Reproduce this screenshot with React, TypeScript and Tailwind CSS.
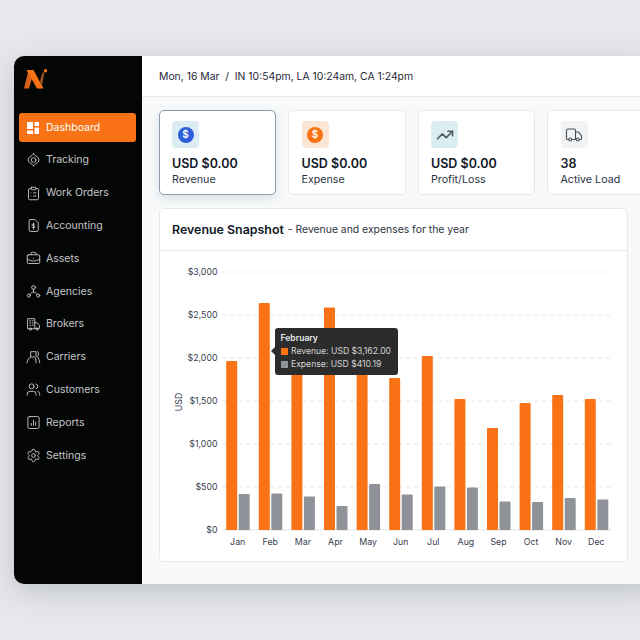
import {
  BriefcaseBusiness,
  ClipboardList,
  Settings,
  TrendingUp,
  Truck,
  Users,
} from "lucide-react";
import type { ReactNode } from "react";

const iconProps = {
  width: 15,
  height: 15,
  viewBox: "0 0 24 24",
  fill: "none",
  stroke: "currentColor",
  strokeWidth: 1.5,
  strokeLinecap: "round" as const,
  strokeLinejoin: "round" as const,
};

function GridIcon() {
  return (
    <svg width="14" height="14" viewBox="0 0 14 14" fill="#fff">
      <rect x="1" y="1" width="6" height="7" rx="0.5" />
      <rect x="8.5" y="1" width="4.5" height="4" rx="0.5" />
      <rect x="8.5" y="6.5" width="4.5" height="6.5" rx="0.5" />
      <rect x="1" y="9.5" width="6" height="3.5" rx="0.5" />
    </svg>
  );
}

function TrackingIcon() {
  return (
    <svg {...iconProps} width={16} height={16}>
      <path d="M12 1.500c1 2.500 3 4 5.500 5 1 .5 3 3 3 5.500s-2 4.500-3 5c-2.500 1-4.500 2.500-5.500 5-1-2.500-3-4-5.500-5-1-.5-3-2.500-3-5s2-5 3-5.500c2.500-1 4.500-2.500 5.500-5z" />
      <circle cx="12" cy="12" r="3.800" />
    </svg>
  );
}

function AccountingIcon() {
  return (
    <svg {...iconProps}>
      <path d="M7 2.500h7.500l5 5V19.500a2 2 0 0 1-2 2H7a2 2 0 0 1-2-2V4.500a2 2 0 0 1 2-2z" />
      <path d="M14.500 10.500c-.5-1-4.500-1.400-5 .4-.4 1.800 5 1.400 4.800 3.400-.3 1.800-4.300 1.500-5-.2M12 8v10" />
    </svg>
  );
}

function AgenciesIcon() {
  return (
    <svg {...iconProps}>
      <circle cx="12" cy="5.500" r="3" />
      <circle cx="4.500" cy="18.500" r="2.500" />
      <circle cx="19.500" cy="18.500" r="2.500" />
      <path d="M12 8.500v4.500M6.500 16.500c1-2.200 3-3.500 5.500-3.500s4.500 1.300 5.500 3.500" />
    </svg>
  );
}

function BrokersIcon() {
  return (
    <svg {...iconProps} width={16} height={16}>
      <path d="M2.500 19V3.500h11.500V19z" />
      <path d="M14 10h4l3.500 4v5H14" />
      <circle cx="7" cy="20" r="1.800" />
      <circle cx="17.500" cy="20" r="1.800" />
      <path d="M6 7h1.500M10 7h1.500M6 10.500h1.500M10 10.500h1.500M6 14h1.500M10 14h1.500" />
    </svg>
  );
}

function CarriersIcon() {
  return (
    <svg {...iconProps} width={16} height={16}>
      <path d="M1.500 21.500c1-5 3-8.500 6-9.500h6c2 1 2.500 4.500 2.500 9.500" />
      <path d="M7.500 12V3.500h8.500V12" />
      <path d="M18.500 3c2 2.500 2 6 0 8.500 2 2.500 3 6 3.500 10" />
    </svg>
  );
}

function ReportsIcon() {
  return (
    <svg {...iconProps}>
      <rect x="3" y="2.500" width="18" height="19" rx="2.500" />
      <path d="M8.500 16.500v-3M12 16.500V8.500M15.500 16.500v-5" />
    </svg>
  );
}

function Logo() {
  return (
    <svg width="24" height="20" viewBox="0 0 24 20" className="shrink-0">
      <path d="M0 19.500L4.500 1h3.500l1 5L5 19.500z" fill="#d9601a" />
      <path d="M2.500 1H9.500L19.500 19.500H13z" fill="#f97316" />
      <path d="M18.500 3.500H20.500L18 16.500l-2.300-3.800z" fill="#9a5020" />
      <circle cx="21.500" cy="1.800" r="1.700" fill="#f97316" />
    </svg>
  );
}

const navItems: { label: string; icon: ReactNode; active?: boolean }[] = [
  { label: "Dashboard", icon: <GridIcon />, active: true },
  { label: "Tracking", icon: <TrackingIcon /> },
  { label: "Work Orders", icon: <ClipboardList size={15} strokeWidth={1.5} /> },
  { label: "Accounting", icon: <AccountingIcon /> },
  { label: "Assets", icon: <BriefcaseBusiness size={15} strokeWidth={1.5} /> },
  { label: "Agencies", icon: <AgenciesIcon /> },
  { label: "Brokers", icon: <BrokersIcon /> },
  { label: "Carriers", icon: <CarriersIcon /> },
  { label: "Customers", icon: <Users size={15} strokeWidth={1.5} /> },
  { label: "Reports", icon: <ReportsIcon /> },
  { label: "Settings", icon: <Settings size={15} strokeWidth={1.5} /> },
];

function DollarBadge({ color }: { color: string }) {
  return (
    <span
      className="flex size-[16px] items-center justify-center rounded-full text-[10px] font-semibold text-white"
      style={{ backgroundColor: color }}
    >
      $
    </span>
  );
}

const stats = [
  { value: "USD $0.00", label: "Revenue", tint: "bg-[#dcecf3]", icon: <DollarBadge color="#2d5fdc" />, active: true },
  { value: "USD $0.00", label: "Expense", tint: "bg-[#fbe6d6]", icon: <DollarBadge color="#f97316" /> },
  { value: "USD $0.00", label: "Profit/Loss", tint: "bg-[#daeef1]", icon: <TrendingUp size={18} strokeWidth={2.25} color="#555b63" /> },
  { value: "38", label: "Active Load", tint: "bg-[#f1f3f5]", icon: <Truck size={18} strokeWidth={1.5} color="#4b5159" /> },
];

// tops of the bars, in px from the top of the chart area
const months = [
  { m: "Jan", rev: 361, exp: 494 },
  { m: "Feb", rev: 303, exp: 493.5 },
  { m: "Mar", rev: 340, exp: 496.5 },
  { m: "Apr", rev: 307.5, exp: 506 },
  { m: "May", rev: 345, exp: 484 },
  { m: "Jun", rev: 378, exp: 494.5 },
  { m: "Jul", rev: 356, exp: 486.5 },
  { m: "Aug", rev: 399, exp: 487.5 },
  { m: "Sep", rev: 428, exp: 501.5 },
  { m: "Oct", rev: 403, exp: 502 },
  { m: "Nov", rev: 395, exp: 498 },
  { m: "Dec", rev: 399, exp: 499.5 },
];

const ticks = ["$3,000", "$2,500", "$2,000", "$1,500", "$1,000", "$500", "$0"];

function Chart() {
  return (
    <svg width="467" height="311" className="block">
      <g transform="translate(-159.5,-251)" fontFamily="Inter, sans-serif" fontSize="8.8" fill="#374151">
        {ticks.map((t, i) => {
          const y = 272 + i * 43;
          return (
            <g key={t}>
              <text x="217" y={y + 3} textAnchor="end">
                {t}
              </text>
              {i < 6 ? (
                <line x1="222" x2="612" y1={y} y2={y} stroke="#e5e7eb" strokeDasharray="4 4" />
              ) : (
                <line x1="222" x2="612" y1={y} y2={y} stroke="#e2e5ea" />
              )}
            </g>
          );
        })}
        <text transform="translate(181,402) rotate(-90)" textAnchor="middle">
          USD
        </text>
        {months.map((d, i) => {
          const x = 225.7 + i * 32.6;
          return (
            <g key={d.m}>
              <path d={`M${x} 530V${d.rev + 1}q0-1 1-1h9q1 0 1 1V530z`} fill="#f97316" />
              <path d={`M${x + 12.5} 530V${d.exp + 1}q0-1 1-1h9q1 0 1 1V530z`} fill="#8f9399" />
              <text x={x + 11.5} y="544.5" textAnchor="middle">
                {d.m}
              </text>
            </g>
          );
        })}
      </g>
    </svg>
  );
}

export default function App() {
  return (
    <div className="h-[640px] w-[640px] overflow-hidden bg-[#e6e8ec] pl-[14px] pt-[56px] font-[family-name:Inter,sans-serif]">
      <div className="flex h-[528px] w-[640px] overflow-hidden rounded-l-[10px] shadow-[0_8px_28px_rgba(60,64,80,0.22)]">
        <aside className="w-[128px] shrink-0 bg-[#040505] pl-[5px] pr-[6px]">
          <div className="flex h-[57px] items-start pl-[5px] pt-[13px]">
            <Logo />
          </div>
          <nav className="flex flex-col gap-[3.8px]">
            {navItems.map((item) => (
              <div
                key={item.label}
                className={
                  item.active
                    ? "flex h-[29px] items-center gap-[5.5px] rounded-[3px] bg-[#f97316] pl-[6.5px] text-[10.5px] text-white"
                    : "flex h-[29px] items-center gap-[5.5px] pl-[6.5px] text-[10.5px] text-[#c4c6c9]"
                }
              >
                <span className="flex w-[15px] justify-center">{item.icon}</span>
                {item.label}
              </div>
            ))}
          </nav>
        </aside>
        <main className="min-w-0 flex-1 bg-[#f7f9fa]">
          <header className="flex h-[41px] items-center border-b border-[#e5e8ec] bg-white pl-[17px] pt-[1px] text-[10.4px] text-[#1f2937]">
            Mon, 16 Mar&nbsp;&nbsp;/&nbsp;&nbsp;IN 10:54pm, LA 10:24am, CA 1:24pm
          </header>
          <div className="pl-[16.5px] pt-[13px]">
            <div className="flex gap-[12px]">
              {stats.map((s) => (
                <div
                  key={s.label}
                  className={
                    s.active
                      ? "h-[85px] w-[117.5px] shrink-0 rounded-[5px] border border-[#8d9cab] bg-white pl-[12.5px] pt-[10px] shadow-[0_4px_10px_rgba(90,110,130,0.16)]"
                      : "h-[85px] w-[117.5px] shrink-0 rounded-[5px] border border-[#e5e8ec] bg-white pl-[12.5px] pt-[10px]"
                  }
                >
                  <div className={`flex size-[27px] items-center justify-center rounded-[4px] ${s.tint}`}>{s.icon}</div>
                  <div className="mt-[7px] text-[12.5px] leading-[18px] font-semibold text-[#111827]">{s.value}</div>
                  <div className="text-[10.7px] leading-[13px] text-[#2b3441]">{s.label}</div>
                </div>
              ))}
            </div>
            <section className="relative mt-[13px] h-[354px] w-[469px] rounded-[5px] border border-[#e5e8ec] bg-white">
              <div className="flex h-[42px] items-center border-b border-[#e5e8ec] pl-[12.5px] pt-[1px] text-[#111827]">
                <span className="text-[12.4px] font-semibold">Revenue Snapshot</span>
                <span className="ml-[4px] text-[10.4px] text-[#2b3441]">- Revenue and expenses for the year</span>
              </div>
              <Chart />
              <div className="absolute left-[115px] top-[119px] h-[47px] w-[123px] whitespace-nowrap rounded-[3px] bg-[#2c2c2c] px-[6px] pt-[4px] text-[8.6px] leading-[13px] text-[#d4d4d4]">
                <span className="absolute left-[-4px] top-[19px] size-0 border-y-[4px] border-r-[4px] border-y-transparent border-r-[#2c2c2c]" />
                <div className="font-semibold text-[#e8e8e8]">February</div>
                <div className="flex items-center gap-[3.5px]">
                  <span className="size-[7px] shrink-0 bg-[#f97316]" />
                  Revenue: USD $3,162.00
                </div>
                <div className="flex items-center gap-[3.5px]">
                  <span className="size-[7px] shrink-0 bg-[#8f9399]" />
                  Expense: USD $410.19
                </div>
              </div>
            </section>
          </div>
        </main>
      </div>
    </div>
  );
}
